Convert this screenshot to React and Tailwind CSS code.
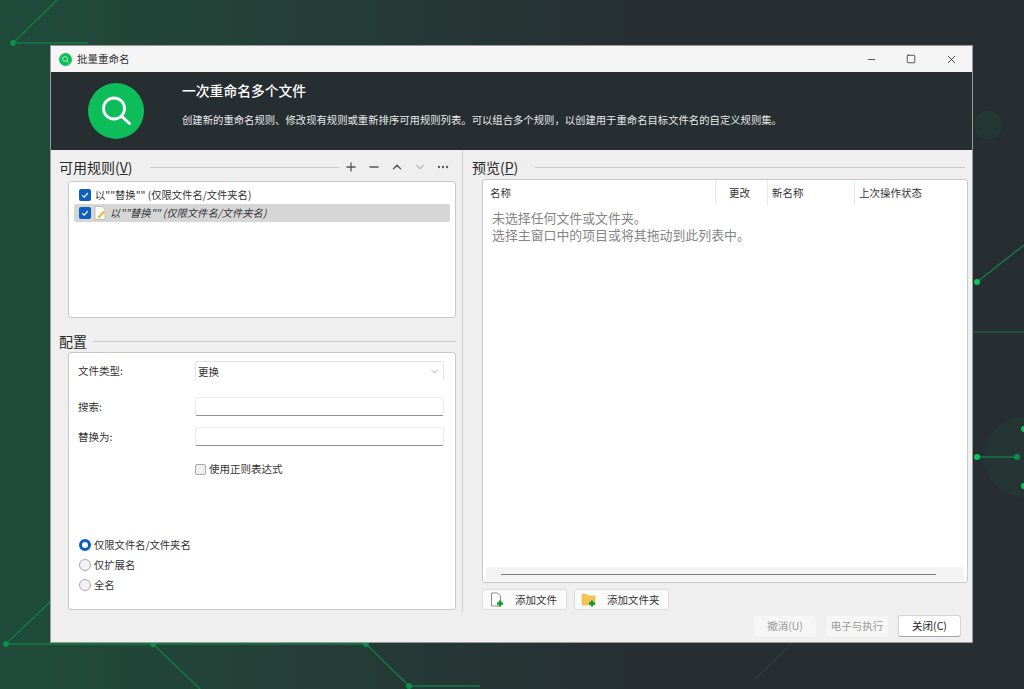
import React from "react";
import { Minus, Plus, ChevronUp, ChevronDown, MoreHorizontal, Square, X } from "lucide-react";

const cjk = "font-['Noto_Sans_CJK_SC','Noto_Sans',sans-serif]";

function SearchLogo({ className }) {
  return (
    <svg viewBox="0 0 56 56" className={className}>
      <circle cx="28" cy="28" r="28" fill="#0cbd59" />
      <circle cx="26" cy="25.5" r="10.5" fill="none" stroke="#fff" strokeWidth="2.8" />
      <path d="M34 33.5 L41.5 40.5" stroke="#fff" strokeWidth="3" strokeLinecap="round" />
    </svg>
  );
}

function Backdrop() {
  const lines = [
    "M13 43 L57 0", "M13 43 L88 43", "M6 644 L366 644", "M51 601 L6 644", "M153 644 L200 689",
    "M366 644 L409 686 L480 686", "M977 282 L1024 245", "M977 457 L1017 457",
  ];
  const dimNodes = [[13, 43], [6, 644], [153, 644], [366, 644], [409, 686], [1017, 457]];
  const brightNodes = [[977, 282], [977, 457], [1024, 429], [1024, 486]];
  return (
    <svg viewBox="0 0 1024 689" className="absolute inset-0 h-full w-full">
      <circle cx="988" cy="125" r="14" fill="#1f4a3a" opacity="0.35" />
      <circle cx="1024" cy="457" r="40" fill="#1f4a3a" opacity="0.25" />
      <path d="M972 332 L1024 332" stroke="#12733f" strokeWidth="1" />
      <path d="M755 679 L792 643" stroke="#2c4a40" strokeWidth="1" />
      {lines.map((d) => (
        <path key={d} d={d} fill="none" stroke="#117c46" strokeWidth="1.4" />
      ))}
      {dimNodes.map(([x, y]) => (
        <circle key={`${x}-${y}`} cx={x} cy={y} r="3" fill="#0b8f4a" />
      ))}
      {brightNodes.map(([x, y]) => (
        <circle key={`${x}-${y}`} cx={x} cy={y} r="3" fill="#0cc45a" />
      ))}
    </svg>
  );
}

function SectionTitle({ children, className = "" }) {
  return (
    <div className={`flex items-center text-[14px] leading-[18px] text-[#2b2b2b] ${className}`}>
      <span>{children}</span>
    </div>
  );
}

function RuleCheck() {
  return (
    <span className="flex h-[12px] w-[12px] shrink-0 items-center justify-center rounded-[2px] bg-[#0a5fc0]">
      <svg viewBox="0 0 12 12" className="h-[10px] w-[10px]">
        <path d="M2.5 6.2 L5 8.6 L9.5 3.6" fill="none" stroke="#fff" strokeWidth="1.4" />
      </svg>
    </span>
  );
}

function NoteIcon() {
  return (
    <svg viewBox="0 0 12 14" className="h-[14px] w-[12px] shrink-0">
      <path d="M1 .5 H8 L11 3.5 V13.5 H1 Z" fill="#fff" stroke="#bdbdbd" />
      <path d="M4 10.5 L9.5 4.5 L11 6 L5.5 12 L3.6 12.4 Z" fill="#f2b632" />
    </svg>
  );
}

function Field({ label }) {
  return (
    <div className="flex h-[19px] items-center">
      <span className="w-[117px] text-[10.5px] text-[#333]">{label}</span>
      <span className="h-[19px] w-[249px] rounded-[2px] border border-[#ececec] border-b-[#8f8f8f] bg-white" />
    </div>
  );
}

function Radio({ label, on }) {
  return (
    <div className="flex h-[20px] items-center gap-[3px] pl-[1px] text-[10.3px] text-[#333]">
      {on ? (
        <span className="h-[12px] w-[12px] rounded-full border-[3.5px] border-[#0a5fc0] bg-white" />
      ) : (
        <span className="h-[12px] w-[12px] rounded-full border border-[#a8a8a8] bg-[#f2f2f2]" />
      )}
      <span>{label}</span>
    </div>
  );
}

function AddFileIcon({ folder }) {
  return (
    <svg viewBox="0 0 16 16" className="h-[16px] w-[16px]">
      {folder ? (
        <path d="M1 2.5 H6 L7.5 4 H14 V13 H1 Z" fill="#f6c354" stroke="#e3a92e" strokeWidth=".5" />
      ) : (
        <path d="M2.5 1 H8.5 L11.5 4 V14 H2.5 Z" fill="#fff" stroke="#8a8a8a" />
      )}
      <path d="M11 8.5 V14.5 M8 11.5 H14" stroke="#0f9d2e" strokeWidth="2.4" />
    </svg>
  );
}

function AddButton({ label, folder, width }) {
  return (
    <div className={`flex h-[21px] items-center rounded-[3px] border border-[#dcdcdc] bg-[#fbfbfb] pl-[6px] text-[10.5px] text-[#333] ${width}`}>
      <AddFileIcon folder={folder} />
      <span className="ml-[10px]">{label}</span>
    </div>
  );
}

function FootButton({ children, disabled }) {
  return disabled ? (
    <div className="flex h-[21px] w-[62px] items-center justify-center rounded-[3px] bg-[#f6f6f6] text-[10.5px] text-[#9a9a9a]">
      {children}
    </div>
  ) : (
    <div className="flex h-[22px] w-[63px] items-center justify-center rounded-[3px] border border-[#d4d4d4] border-b-[#a5a5a5] bg-white text-[10.5px] text-[#222]">
      {children}
    </div>
  );
}

export default function App() {
  return (
    <div className={`relative h-[689px] w-[1024px] overflow-hidden bg-gradient-to-r from-[#204a3a] from-[5%] to-[#262e32] to-[62%] pl-[51px] pt-[46px] ${cjk}`}>
      <Backdrop />
      <div className="relative flex h-[596px] w-[921px] flex-col bg-[#efefef] shadow-[0_0_0_1px_#9a9a9a]">
        {/* title bar */}
        <div className="flex h-[26px] shrink-0 items-center bg-[#f5f5f5] pl-[8px] pr-[14px]">
          <SearchLogo className="h-[13px] w-[13px]" />
          <span className="ml-[5px] text-[10.5px] text-[#333]">批量重命名</span>
          <div className="ml-auto flex items-center gap-[29px] text-[#222]">
            <Minus size={11} strokeWidth={1.6} />
            <Square size={10} strokeWidth={1.8} />
            <X size={13} strokeWidth={1.5} />
          </div>
        </div>

        {/* banner */}
        <div className="flex h-[78px] shrink-0 bg-[#262e32] pl-[37px]">
          <SearchLogo className="mt-[11px] h-[56px] w-[56px]" />
          <div className="ml-[38px] text-white">
            <div className="mt-[8px] text-[13.8px] font-medium leading-[20px]">一次重命名多个文件</div>
            <div className="mt-[12px] whitespace-nowrap text-[10.35px] leading-[16px] text-[#e8eaea]">
              创建新的重命名规则、修改现有规则或重新排序可用规则列表。可以组合多个规则，以创建用于重命名目标文件名的自定义规则集。
            </div>
          </div>
        </div>

        <div className="flex min-h-0 flex-1">
          {/* left column */}
          <div className="mb-[30px] w-[412px] shrink-0 border-r border-[#cfcfcf] pl-[8px]">
            <div className="mt-[8px] flex h-[18px] items-center pr-[6px]">
              <SectionTitle>
                可用规则(<span className="underline">V</span>)
              </SectionTitle>
              <span className="ml-[17px] h-px w-[189px] bg-[#c9c9c9]" />
              <div className="ml-[5px] flex items-center gap-[9px] text-[#555]">
                <Plus size={14} strokeWidth={2.2} />
                <Minus size={14} strokeWidth={2.2} />
                <ChevronUp size={14} strokeWidth={2.4} />
                <ChevronDown size={14} strokeWidth={2} className="text-[#bcbcbc]" />
                <MoreHorizontal size={14} strokeWidth={2} />
              </div>
            </div>
            <div className="ml-[9px] mt-[5px] h-[137px] w-[388px] rounded-[3px] border border-[#c8c8c8] bg-white px-[5px] pt-[4px] text-[10.3px] text-[#333]">
              <div className="flex h-[18px] items-center pl-[5px]">
                <RuleCheck />
                <span className="ml-[4px]">{'以""替换"" (仅限文件名/文件夹名)'}</span>
              </div>
              <div className="flex h-[18px] items-center rounded-[2px] bg-[#d6d6d6] pl-[5px] italic">
                <RuleCheck />
                <span className="ml-[3px]"><NoteIcon /></span>
                <span className="ml-[4px]">{'以""替换"" (仅限文件名/文件夹名)'}</span>
              </div>
            </div>

            <div className="mt-[14px] flex h-[18px] items-center pr-[6px]">
              <SectionTitle>配置</SectionTitle>
              <span className="ml-[6px] h-px flex-1 bg-[#c9c9c9]" />
            </div>
            <div className="ml-[9px] mt-[2px] h-[258px] w-[388px] rounded-[3px] border border-[#c8c8c8] bg-white pl-[9px] pt-[8px]">
              <div className="flex h-[20px] items-center">
                <span className="w-[117px] text-[10.5px] text-[#333]">文件类型:</span>
                <span className="flex h-[20px] w-[249px] items-center justify-between rounded-t-[2px] border-x border-t border-[#e4e4e4] pl-[2px] pr-[3px] text-[10.5px] text-[#333]">
                  更换
                  <ChevronDown size={11} strokeWidth={1.2} className="text-[#666]" />
                </span>
              </div>
              <div className="mt-[16px]"><Field label="搜索:" /></div>
              <div className="mt-[11px]"><Field label="替换为:" /></div>
              <div className="ml-[117px] mt-[13px] flex h-[20px] items-center gap-[3px] text-[10.5px] text-[#333]">
                <span className="h-[11px] w-[11px] rounded-[2px] border border-[#a8a8a8] bg-[#f0f0f0]" />
                使用正则表达式
              </div>
              <div className="mt-[56px]">
                <Radio label="仅限文件名/文件夹名" on />
                <Radio label="仅扩展名" />
                <Radio label="全名" />
              </div>
            </div>
          </div>

          {/* right column */}
          <div className="min-w-0 flex-1 pl-[9px]">
            <div className="mt-[8px] flex h-[18px] items-center pr-[7px]">
              <SectionTitle>
                预览(<span className="underline">P</span>)
              </SectionTitle>
              <span className="ml-[17px] h-px flex-1 bg-[#c9c9c9]" />
            </div>
            <div className="ml-[10px] mt-[3px] flex h-[404px] w-[486px] flex-col rounded-[3px] border border-[#c8c8c8] bg-white">
              <div className="flex h-[25px] shrink-0 items-center text-[10.5px] text-[#333]">
                <span className="flex h-full w-[233px] items-center border-r border-[#e8e8e8] pl-[7px]">名称</span>
                <span className="flex h-full w-[52px] items-center justify-end border-r border-[#e8e8e8] pr-[17px]">更改</span>
                <span className="flex h-full w-[87px] items-center border-r border-[#e8e8e8] pl-[4px]">新名称</span>
                <span className="pl-[4px]">上次操作状态</span>
              </div>
              <div className="pl-[9px] pt-[4px] text-[12.9px] leading-[17px] text-[#858585]">
                <div>未选择任何文件或文件夹。</div>
                <div>选择主窗口中的项目或将其拖动到此列表中。</div>
              </div>
              <div className="mx-[3px] mb-[1px] mt-auto flex h-[14px] items-center bg-[#f3f3f3] pl-[15px]">
                <span className="h-px w-[435px] bg-[#7e7e7e]" />
              </div>
            </div>
            <div className="ml-[10px] mt-[6px] flex gap-[7px]">
              <AddButton label="添加文件" width="w-[85px]" />
              <AddButton label="添加文件夹" folder width="w-[95px]" />
            </div>
            <div className="mt-[5px] flex items-center justify-end gap-[10px] pr-[11px]">
              <FootButton disabled>撤消(U)</FootButton>
              <FootButton disabled>电子与执行</FootButton>
              <FootButton>关闭(C)</FootButton>
            </div>
          </div>
        </div>
      </div>
    </div>
  );
}
